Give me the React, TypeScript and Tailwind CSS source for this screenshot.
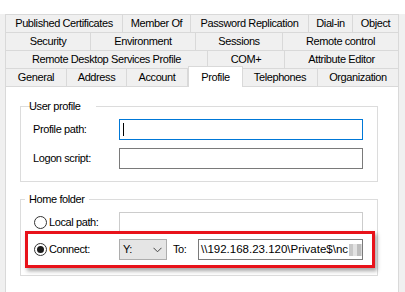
import React from "react";

type Tab = { label: string; w: string };

const ROWS: Tab[][] = [
  [
    { label: "Published Certificates", w: "w-[118px]" },
    { label: "Member Of", w: "w-[68px]" },
    { label: "Password Replication", w: "w-[118px]" },
    { label: "Dial-in", w: "w-[44px]" },
    { label: "Object", w: "w-[46px]" },
  ],
  [
    { label: "Security", w: "w-[86px]" },
    { label: "Environment", w: "w-[105px]" },
    { label: "Sessions", w: "w-[87px]" },
    { label: "Remote control", w: "w-[116px]" },
  ],
  [
    { label: "Remote Desktop Services Profile", w: "w-[203px]" },
    { label: "COM+", w: "w-[77px]" },
    { label: "Attribute Editor", w: "w-[114px]" },
  ],
];

const BOTTOM: Tab[] = [
  { label: "General", w: "w-[62px]" },
  { label: "Address", w: "w-[60px]" },
  { label: "Account", w: "w-[61px]" },
  { label: "Profile", w: "w-[55px]" },
  { label: "Telephones", w: "w-[75px]" },
  { label: "Organization", w: "w-[81px]" },
];

function Radio({ checked }: { checked?: boolean }) {
  return (
    <span className="w-[13px] h-[13px] rounded-full border border-[#333] bg-white flex items-center justify-center shrink-0">
      {checked && <span className="w-[7px] h-[7px] rounded-full bg-[#1a1a1a]" />}
    </span>
  );
}

export default function App() {
  return (
    <div className="w-[405px] h-[292px] overflow-hidden bg-[#f0f0f0] text-[11px] tracking-[-0.4px] text-black font-['Liberation_Sans',Arial,sans-serif]">
      <div className="h-[14px] bg-white" />

      <div className="pl-[5px]">
        {ROWS.map((row, i) => (
          <div key={i} className="flex h-[18px]">
            {row.map((t, j) => (
              <div
                key={t.label}
                className={`${t.w} h-[18px] border-t border-r border-[#d9d9d9] flex items-center justify-center whitespace-nowrap ${j === 0 ? "border-l" : ""}`}
              >
                {t.label}
              </div>
            ))}
          </div>
        ))}
        <div className="flex h-[18px]">
          {BOTTOM.map((t, j) =>
            t.label === "Profile" ? (
              <div
                key={t.label}
                className={`${t.w} h-[21px] -mt-[2px] relative z-10 bg-white border-t border-x border-[#d9d9d9] flex items-start pt-[2px] justify-center`}
              >
                {t.label}
              </div>
            ) : (
              <div
                key={t.label}
                className={`${t.w} h-[18px] border-t border-r border-[#d9d9d9] flex items-center justify-center whitespace-nowrap ${j === 0 ? "border-l" : ""}`}
              >
                {t.label}
              </div>
            )
          )}
        </div>

        {/* tab page */}
        <div className="w-[394px] h-[220px] bg-white border border-[#d9d9d9] pl-[14px] pt-[11px]">
          <fieldset className="w-[358px] border border-[#dcdcdc] pl-[12px] pb-[12px]">
            <legend className="ml-[4px] px-[4px] -translate-x-[12px] leading-[16px]">User profile</legend>
            <div className="flex items-center h-[21px] mt-[5px]">
              <span className="w-[86px]">Profile path:</span>
              <div className="w-[244px] h-[21px] border border-[#0078d7] flex items-center pl-[3px]">
                <span className="w-px h-[13px] bg-black" />
              </div>
            </div>
            <div className="flex items-center h-[21px] mt-[8px]">
              <span className="w-[86px]">Logon script:</span>
              <div className="w-[244px] h-[21px] border border-[#7a7a7a]" />
            </div>
          </fieldset>

          <fieldset className="w-[358px] mt-[9px] border border-[#dcdcdc] pb-[7px]">
            <legend className="ml-[4px] px-[4px] leading-[16px]">Home folder</legend>
            <div className="flex items-center h-[21px] mt-[5px] pl-[13px]">
              <Radio />
              <span className="w-[70px] ml-[2px]">Local path:</span>
              <div className="w-[244px] h-[21px] border border-[#cccccc]" />
            </div>
            <div className="relative z-10 -mt-[2px] ml-[4px] w-[350px] h-[37px] border-[3px] border-[#e8121a] bg-white shadow-[2px_3px_4px_rgba(0,0,0,0.35)] flex items-center pl-[6px]">
              <Radio checked />
              <span className="w-[70px] ml-[2px]">Connect:</span>
              <div className="w-[48px] h-[21px] bg-[#e5e5e5] border border-[#adadad] flex items-center justify-between pl-[3px] pr-[4px]">
                <span>Y:</span>
                <svg width="9" height="6" viewBox="0 0 9 6" fill="none">
                  <polyline points="0.5,0.8 4.5,4.8 8.5,0.8" stroke="#444" strokeWidth="1" />
                </svg>
              </div>
              <span className="ml-[6px] w-[25px]">To:</span>
              <div className="w-[165px] h-[21px] border border-[#7a7a7a] flex items-center pl-[2px] overflow-hidden whitespace-nowrap text-[11.5px] tracking-normal">
                <span>\\192.168.23.120\Private$\nc</span>
                <span className="flex ml-[1px]">
                  <span className="w-[4px] h-[12px] bg-[#c8c8c8]" />
                  <span className="w-[4px] h-[12px] bg-[#e2e2e2]" />
                  <span className="w-[4px] h-[12px] bg-[#bdbdbd]" />
                  <span className="w-[3px] h-[12px] bg-[#dcdcdc]" />
                </span>
              </div>
            </div>
          </fieldset>
        </div>
      </div>
    </div>
  );
}
